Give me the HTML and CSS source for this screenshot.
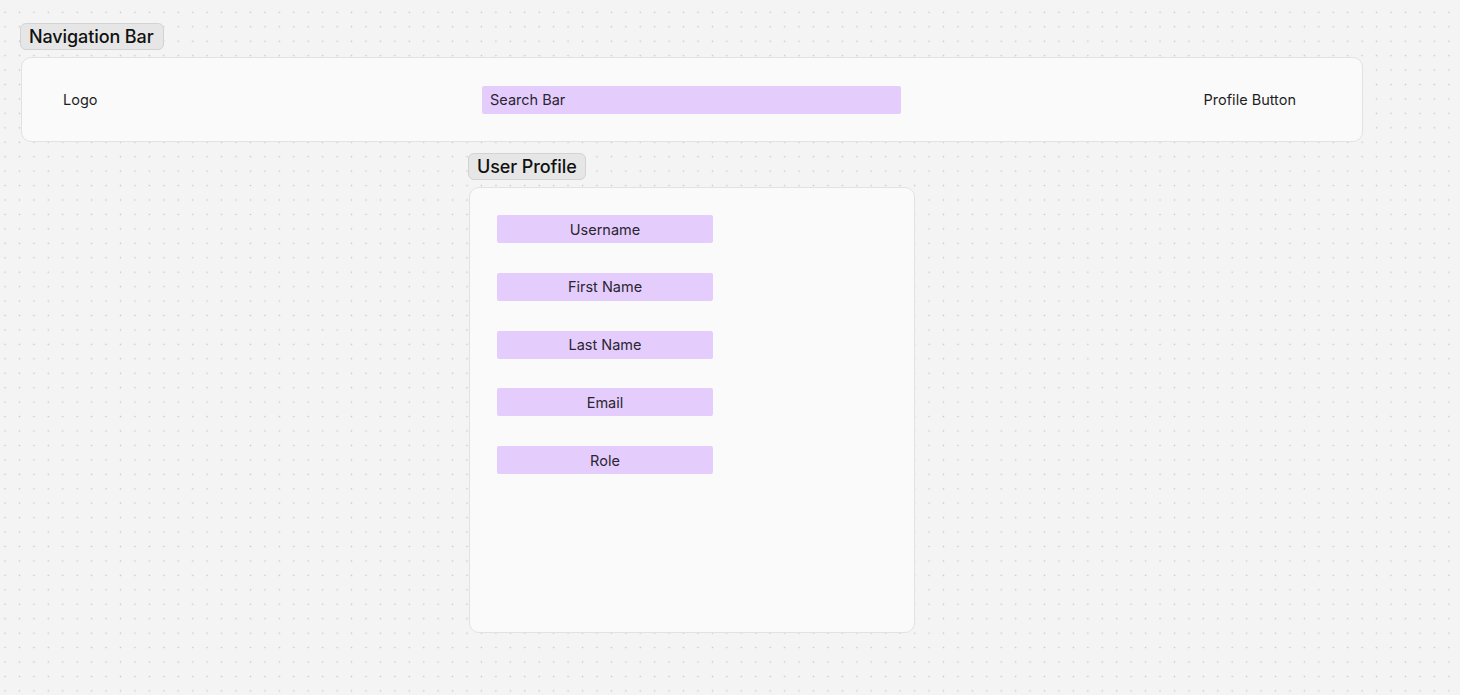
FILE: index.html
```html
<!DOCTYPE html>
<html>
<head>
<meta charset="utf-8">
<link rel="stylesheet" href="styles.css">
</head>
<body>
<div class="canvas">
  <section class="group group-nav">
    <div class="label">Navigation Bar</div>
    <div class="panel nav-panel">
      <div class="logo">Logo</div>
      <div class="search">Search Bar</div>
      <div class="profile-btn">Profile Button</div>
    </div>
  </section>
  <section class="group group-profile">
    <div class="label">User Profile</div>
    <div class="panel profile-panel">
      <div class="field">Username</div>
      <div class="field">First Name</div>
      <div class="field">Last Name</div>
      <div class="field">Email</div>
      <div class="field">Role</div>
    </div>
  </section>
</div>
</body>
</html>
```

FILE: styles.css
```css
html, body {
  margin: 0;
  padding: 0;
}
body {
  width: 1460px;
  height: 695px;
  overflow: hidden;
  background-color: #f4f4f4;
  background-image: radial-gradient(circle, #c9c9c9 0.6px, rgba(244,244,244,0) 1.1px);
  background-size: 14.44px 14.44px;
  background-position: -2.2px 5.1px;
  font-family: "Inter", "Liberation Sans", sans-serif;
  color: #1e1e1e;
}
.canvas {
  padding: 23px 0 0 20px;
  display: flex;
  flex-direction: column;
}
.group {
  display: flex;
  flex-direction: column;
  align-items: flex-start;
}
.label {
  box-sizing: border-box;
  height: 27px;
  padding: 0 8px;
  display: flex;
  align-items: center;
  font-size: 18px;
  font-weight: 500;
  color: #111;
  background: #e6e6e6;
  border: 1px solid #d3d3d3;
  border-radius: 6px;
  letter-spacing: -0.1px;
}
.group-nav .label { width: 144px; }
.panel {
  box-sizing: border-box;
  background: #fafafa;
  border: 1.5px solid #e2e2e2;
  border-radius: 10px;
  margin-top: 7px;
}
.nav-panel {
  margin-left: 1px;
  width: 1342px;
  height: 85px;
  display: flex;
  align-items: center;
  padding: 0 66px 0 41px;
  font-size: 14.5px;
}
.logo {
  width: 419px;
}
.search {
  box-sizing: border-box;
  width: 419px;
  height: 28px;
  background: #e4cdfd;
  border-radius: 2px;
  padding-left: 8px;
  display: flex;
  align-items: center;
  color: #2a2530;
}
.profile-btn {
  margin-left: auto;
}
.group-profile {
  margin-top: 11px;
  margin-left: 448px;
}
.group-profile .label { width: 118px; }
.profile-panel {
  margin-left: 1px;
  width: 446px;
  height: 446px;
  padding: 27px 0 0 27px;
  display: flex;
  flex-direction: column;
  gap: 29.75px;
}
.field {
  width: 216px;
  height: 28px;
  background: #e4cdfd;
  border-radius: 2px;
  display: flex;
  align-items: center;
  justify-content: center;
  font-size: 14.5px;
  color: #2a2530;
}
```
